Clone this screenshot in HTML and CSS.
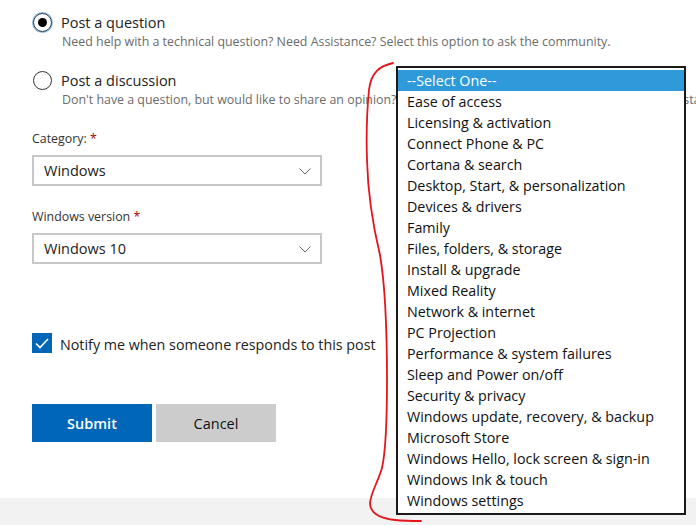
FILE: index.html
```html
<!DOCTYPE html>
<html lang="en">
<head>
<meta charset="utf-8">
<title>Ask a question</title>
<link rel="stylesheet" href="styles.css">
</head>
<body>
<div class="page">
  <main class="form">
    <div class="option">
      <div class="option-row">
        <span class="radio radio-checked"><span class="dot"></span></span>
        <span class="option-label">Post a question</span>
      </div>
      <div class="hint">Need help with a technical question? Need Assistance? Select this option to ask the community.</div>
    </div>
    <div class="option option-second">
      <div class="option-row">
        <span class="radio"></span>
        <span class="option-label">Post a discussion</span>
      </div>
      <div class="hint">Don't have a question, but would like to share an opinion? Have feedback, best practices or ideas? Post it to start a discussion.</div>
    </div>

    <div class="field field-first">
      <div class="field-label">Category: <span class="req">*</span></div>
      <div class="select">
        <span>Windows</span>
        <svg class="chev" width="12" height="7" viewBox="0 0 12 7"><path d="M0.5 0.5 L6 6 L11.5 0.5" fill="none" stroke="#666" stroke-width="1"/></svg>
      </div>
    </div>
    <div class="field">
      <div class="field-label">Windows version <span class="req">*</span></div>
      <div class="select">
        <span>Windows 10</span>
        <svg class="chev" width="12" height="7" viewBox="0 0 12 7"><path d="M0.5 0.5 L6 6 L11.5 0.5" fill="none" stroke="#666" stroke-width="1"/></svg>
      </div>
    </div>

    <label class="notify">
      <span class="checkbox">
        <svg width="14" height="11" viewBox="0 0 14 11"><path d="M1 5.5 L5 9.5 L13 1" fill="none" stroke="#fff" stroke-width="1.6"/></svg>
      </span>
      <span class="notify-text">Notify me when someone responds to this post</span>
    </label>

    <div class="actions">
      <button class="btn btn-primary">Submit</button>
      <button class="btn btn-secondary">Cancel</button>
    </div>
  </main>
  <footer class="footer"></footer>

  <ul class="dropdown">
    <li class="selected">--Select One--</li>
    <li>Ease of access</li>
    <li>Licensing &amp; activation</li>
    <li>Connect Phone &amp; PC</li>
    <li>Cortana &amp; search</li>
    <li>Desktop, Start, &amp; personalization</li>
    <li>Devices &amp; drivers</li>
    <li>Family</li>
    <li>Files, folders, &amp; storage</li>
    <li>Install &amp; upgrade</li>
    <li>Mixed Reality</li>
    <li>Network &amp; internet</li>
    <li>PC Projection</li>
    <li>Performance &amp; system failures</li>
    <li>Sleep and Power on/off</li>
    <li>Security &amp; privacy</li>
    <li>Windows update, recovery, &amp; backup</li>
    <li>Microsoft Store</li>
    <li>Windows Hello, lock screen &amp; sign-in</li>
    <li>Windows Ink &amp; touch</li>
    <li>Windows settings</li>
  </ul>

  <svg class="scribble" width="696" height="525" viewBox="0 0 696 525">
    <path d="M393 63 C380 66, 371 72, 369 90 C367 110, 366 130, 367 160 C368 200, 374 230, 380 255 C386 290, 387 330, 387 380 C387 420, 386 450, 382 468 C378 482, 371 492, 370 503 C370 512, 378 518, 395 520 C405 521, 413 521, 421 521" fill="none" stroke="#e3161b" stroke-width="1.8" stroke-linecap="round"/>
  </svg>
</div>
</body>
</html>
```
FILE: styles.css
```css
* { box-sizing: border-box; }
html, body { margin: 0; padding: 0; }
body {
  background: #fff;
  font-family: "Open Sans", "Liberation Sans", sans-serif;
  color: #262626;
  overflow: hidden;
}
.page {
  position: relative;
  width: 696px;
  height: 525px;
  display: flex;
  flex-direction: column;
  overflow: hidden;
}
.form {
  flex: 1;
  padding: 12px 0 0 32px;
}
.option-row {
  display: flex;
  align-items: center;
  height: 20px;
  gap: 9px;
}
.radio {
  width: 19px;
  height: 19px;
  border-radius: 50%;
  border: 1.5px solid #333;
  display: flex;
  align-items: center;
  justify-content: center;
  margin-left: 1px;
  flex: none;
}
.radio-checked {
  border-color: #1b3550;
  box-shadow: 0 0 0 1px #8db8e0;
}
.dot {
  width: 9px;
  height: 9px;
  border-radius: 50%;
  background: #000;
}
.option-label {
  font-size: 14.5px;
  color: #222;
}
.hint {
  font-size: 12.4px;
  color: #6b6b6b;
  margin: 0 0 0 30px;
  height: 19px;
  line-height: 19px;
  white-space: nowrap;
}
.option-second { margin-top: 19px; }
.field-first { margin-top: 21px; }
.field { margin-bottom: 22px; }
.field-label {
  font-size: 12.4px;
  color: #333;
  height: 18px;
  line-height: 18px;
  margin-bottom: 7px;
}
.req { color: #a80000; }
.select {
  width: 290px;
  height: 31px;
  border: 2px solid #c8c8c8;
  display: flex;
  align-items: center;
  justify-content: space-between;
  padding: 0 9px 0 10px;
  font-size: 14.5px;
  color: #222;
}
.chev { margin-top: 1px; }
.notify {
  display: flex;
  align-items: center;
  gap: 8px;
  margin-top: 69px;
  height: 20px;
}
.checkbox {
  width: 20px;
  height: 20px;
  background: #0067b8;
  display: flex;
  align-items: center;
  justify-content: center;
  flex: none;
}
.notify-text {
  font-size: 14.3px;
  color: #222;
  margin-top: 2px;
}
.actions {
  display: flex;
  gap: 4px;
  margin-top: 51px;
}
.btn {
  width: 120px;
  height: 38px;
  border: none;
  font-family: inherit;
  font-size: 14.5px;
  padding: 0;
}
.btn-primary {
  background: #0067b8;
  color: #fff;
  font-weight: 600;
}
.btn-secondary {
  background: #cccccc;
  color: #111;
}
.footer {
  height: 27px;
  background: #f2f2f2;
  flex: none;
}
.dropdown {
  position: absolute;
  left: 396px;
  top: 66px;
  width: 290px;
  margin: 0;
  padding: 2px 0;
  list-style: none;
  background: #fff;
  border: 2px solid #1a1a1a;
}
.dropdown li {
  height: 21px;
  line-height: 21px;
  padding-left: 9px;
  font-size: 14.3px;
  color: #111;
  white-space: nowrap;
}
.dropdown li.selected {
  background: #2e9ad9;
  color: #fff;
}
.scribble {
  position: absolute;
  left: 0;
  top: 0;
  pointer-events: none;
}
```
